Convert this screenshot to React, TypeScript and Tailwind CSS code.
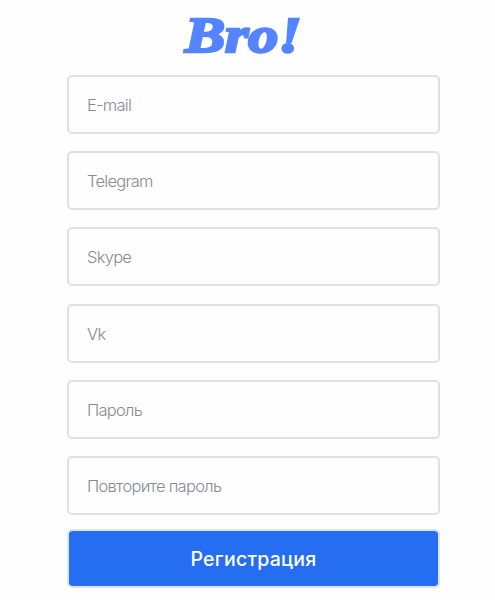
import React, { useState } from 'react';

interface Field {
  name: string;
  type: string;
  placeholder: string;
}

const FIELDS: Field[] = [
  { name: 'email', type: 'email', placeholder: 'E-mail' },
  { name: 'telegram', type: 'text', placeholder: 'Telegram' },
  { name: 'skype', type: 'text', placeholder: 'Skype' },
  { name: 'vk', type: 'text', placeholder: 'Vk' },
  { name: 'password', type: 'password', placeholder: 'Пароль' },
  { name: 'passwordRepeat', type: 'password', placeholder: 'Повторите пароль' },
];

function Logo() {
  return (
    <h1 className="flex h-[75px] pl-[118px] pt-[6px] font-['Liberation_Serif',serif] text-[51px] leading-[58px] font-bold italic text-[#5484ff] whitespace-nowrap [-webkit-text-stroke:2.5px_#5484ff]">
      <span className="origin-left scale-x-[1.18] tracking-[-0.1px]">Bro!</span>
    </h1>
  );
}

export default function App() {
  const [values, setValues] = useState<Record<string, string>>({});

  return (
    <div className="h-[600px] w-[495px] overflow-hidden bg-[#fefefe] pl-[67px] font-['Inter',sans-serif]">
      <Logo />

      <form className="flex w-[373px] flex-col" onSubmit={(e) => e.preventDefault()}>
        <div className="flex flex-col gap-[17.2px]">
          {FIELDS.map((field) => (
            <input
              key={field.name}
              name={field.name}
              type={field.type}
              placeholder={field.placeholder}
              value={values[field.name] ?? ''}
              onChange={(e) => setValues({ ...values, [field.name]: e.target.value })}
              className="h-[59px] w-full rounded-[5px] border-2 border-[#e0e1e5] bg-[#fefefe] px-[18px] pt-px text-[16.5px] font-light tracking-[-0.72px] text-gray-800 outline-none placeholder:text-[#858b96] focus:border-[#266ef1]"
            />
          ))}
        </div>

        <button
          type="submit"
          className="mt-[14px] h-[59px] w-full rounded-[5px] border-2 border-[#dce4f5] bg-[#266ef1] bg-clip-padding pt-[2px] text-[19.5px] font-medium tracking-[0.25px] text-white"
        >
          Регистрация
        </button>
      </form>
    </div>
  );
}
